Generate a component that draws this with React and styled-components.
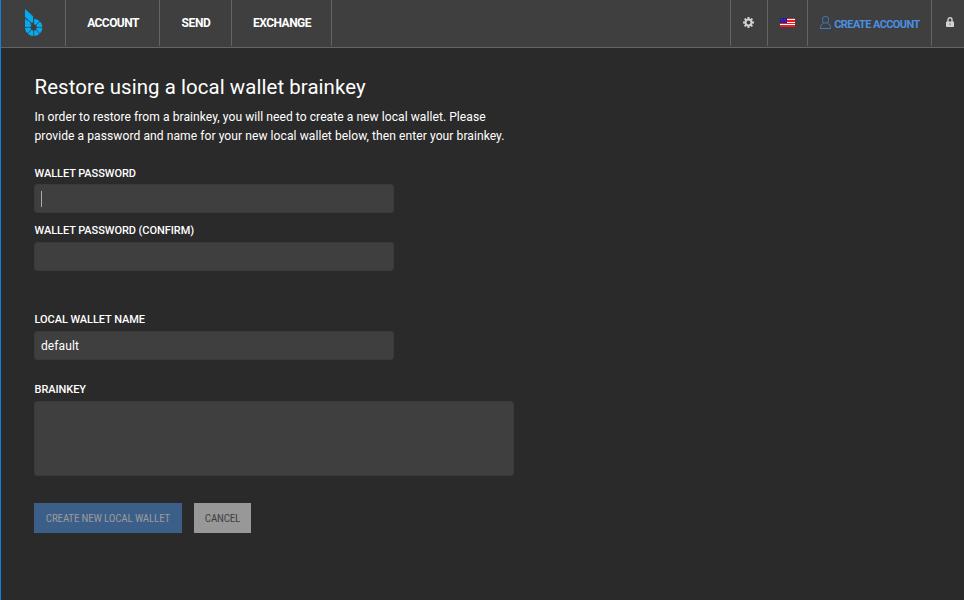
import React from "react";
import styled, { createGlobalStyle } from "styled-components";

const GlobalStyle = createGlobalStyle`
  * { box-sizing: border-box; }
  body {
    margin: 0;
    background: #2a2a2a;
    color: #fff;
    font-family: Roboto, "Liberation Sans", sans-serif;
  }
`;

const Page = styled.div`
  width: 964px;
  height: 600px;
  overflow: hidden;
  border-left: 1px solid #1580d8;
  background: #2a2a2a;
`;

const Header = styled.header`
  display: flex;
  height: 48px;
  padding-bottom: 1px;
  background: #3f3f3f;
  border-bottom: 1px solid #646464;
`;

const MenuItem = styled.a`
  display: flex;
  flex: none;
  align-items: center;
  justify-content: center;
  width: ${(p) => p.$width}px;
  padding-left: ${(p) => p.$inset || 0}px;
  border-right: 1px solid #646464;
  font-size: 12px;
  font-weight: 700;
  letter-spacing: ${(p) => p.$spacing || 0}px;
  white-space: nowrap;
`;

const Tools = styled.div`
  display: flex;
  flex: none;
  width: 234px;
  margin-left: auto;
  border-left: 1px solid #646464;
`;

const Tool = styled(MenuItem)`
  padding-bottom: ${(p) => p.$lift || 0}px;
  padding-right: ${(p) => p.$shift || 0}px;
`;

const AccountLink = styled(MenuItem)`
  gap: 3px;
  color: #4a90e2;
  font-size: 11px;
  svg { margin-top: -1px; }
  span { padding-top: 2px; }
`;

const LockCell = styled.a`
  display: flex;
  padding: 17px 0 0 14px;
`;

const Content = styled.main`
  padding: 26px 0 0 33px;
`;

const Title = styled.h1`
  margin: 0;
  padding-left: 0.5px;
  font-size: 20.4px;
  font-weight: 450;
  line-height: 26px;
  letter-spacing: 0.08px;
`;

const Intro = styled.p`
  margin: 8px 0 18px;
  padding-left: 0.5px;
  font-size: 12.1px;
  font-weight: 450;
  line-height: 19px;
  white-space: nowrap;
`;

const IntroLine = styled.span`
  display: block;
  letter-spacing: ${(p) => p.$spacing}px;
`;

const Field = styled.div`
  margin-bottom: ${(p) => p.$gap}px;
`;

const Label = styled.label`
  display: block;
  height: 20px;
  padding-left: 0.5px;
  font-size: 11px;
  font-weight: 550;
  line-height: ${(p) => p.$line || 18}px;
  letter-spacing: -0.06px;
`;

const Input = styled.div`
  display: flex;
  align-items: center;
  width: 360px;
  height: 29px;
  padding: 0 6px;
  border: 1px solid #3a3a3a;
  border-radius: 3px;
  background: #3f3f3f;
  font-size: 12px;
  font-weight: 450;
  letter-spacing: 0.1px;
`;

const TextArea = styled(Input)`
  width: 480px;
  height: 75px;
`;

const Caret = styled.span`
  width: 1px;
  height: 16px;
  background: #aaa;
`;

const Actions = styled.div`
  display: flex;
  gap: 12px;
`;

const Button = styled.button`
  display: flex;
  align-items: center;
  justify-content: center;
  width: ${(p) => p.$width}px;
  height: 30px;
  padding: 0;
  border: 0;
  background: ${(p) => (p.$primary ? "#3b5f89" : "#989898")};
  color: ${(p) => (p.$primary ? "#9a9a9a" : "#404040")};
  font-family: Roboto, sans-serif;
  font-size: 11px;
  font-weight: 450;
  font-stretch: 75%;
  letter-spacing: -0.17px;
  white-space: nowrap;
`;

const spokes = [0, 1, 2, 3, 4, 5, 6, 7];

const Logo = () => (
  <svg width="18" height="28" viewBox="0 0 18 28">
    <path d="M0 0 L8.1 7.2 V13.2 L6.6 13.8 L0 8Z" fill="#03abf0" />
    <path d="M0 9.4 L5.2 14.1 L4 17.9 H0Z" fill="#03abf0" />
    <circle cx="8.7" cy="18.4" r="5.9" fill="none" stroke="#03abf0" strokeWidth="5.6"
      strokeDasharray="32.4 4.67" transform="rotate(-90 8.7 18.4)" />
    {spokes.map((i) => (
      <path key={i} d={i === 3 ? "M8.7 18.4V23" : "M8.7 18.4V28"} stroke="#3f3f3f"
        strokeWidth="0.8" transform={`rotate(${i * 45} 8.7 18.4)`} />
    ))}
  </svg>
);

const Gear = () => (
  <svg width="11" height="11" viewBox="0 0 11 11">
    <circle cx="5.5" cy="5.5" r="3" fill="none" stroke="#d2d2d2" strokeWidth="2" />
    {[0, 45, 90, 135].map((a) => (
      <path key={a} d="M5.5 0V2.2M5.5 8.8V11" stroke="#d2d2d2" strokeWidth="2"
        transform={`rotate(${a} 5.5 5.5)`} />
    ))}
  </svg>
);

const Flag = () => (
  <svg width="15" height="9" viewBox="0 0 15 9" shapeRendering="crispEdges">
    <path fill="#fff" d="M0 0H15V9H0Z" />
    <path fill="#ee1b24" d="M0 0H15V1H0ZM0 2H15V4H0ZM0 5H15V6H0ZM0 7H15V9H0Z" />
    <path fill="#20209a" d="M0 0H7V5H0Z" />
    <path fill="#4a4ab0" d="M1 1H2V2H1ZM4 1H5V2H4ZM2 3H3V4H2ZM5 3H6V4H5Z" />
  </svg>
);

const User = () => (
  <svg width="11" height="13" viewBox="0 0 11 13" fill="none" stroke="#3f7abd">
    <rect x="2.5" y="0.5" width="6" height="6.5" rx="2.6" />
    <path d="M3.5 7.5C1.5 8 0.5 9 0.5 12.5H10.5C10.5 9 9.5 8 7.5 7.5" />
  </svg>
);

const Lock = () => (
  <svg width="8" height="10" viewBox="0 0 8 10">
    <path d="M2 5V2.8A2 2 0 0 1 6 2.8V5" fill="none" stroke="#d2d2d2" strokeWidth="1.4" />
    <rect y="4.5" width="8" height="5.5" rx="0.7" fill="#d2d2d2" />
    <path d="M4 6.2V8.2" stroke="#777" />
  </svg>
);

export default function App() {
  return (
    <Page>
      <GlobalStyle />
      <Header>
        <MenuItem $width={65} $inset={2}><Logo /></MenuItem>
        <MenuItem $width={94} $inset={1} $spacing={-0.55}>ACCOUNT</MenuItem>
        <MenuItem $width={72} $inset={1} $spacing={-0.4}>SEND</MenuItem>
        <MenuItem $width={100} $inset={1} $spacing={-0.5}>EXCHANGE</MenuItem>
        <Tools>
          <Tool $width={37} $lift={1} $shift={1}><Gear /></Tool>
          <Tool $width={40} $lift={1}><Flag /></Tool>
          <AccountLink $width={124} $inset={1} $spacing={-0.6}>
            <User />
            <span>CREATE ACCOUNT</span>
          </AccountLink>
          <LockCell><Lock /></LockCell>
        </Tools>
      </Header>
      <Content>
        <Title>Restore using a local wallet brainkey</Title>
        <Intro>
          <IntroLine $spacing={0.045}>In order to restore from a brainkey, you will need to create a new local wallet. Please</IntroLine>
          <IntroLine $spacing={0.055}>provide a password and name for your new local wallet below, then enter your brainkey.</IntroLine>
        </Intro>
        <Field $gap={9}>
          <Label $line={20}>WALLET PASSWORD</Label>
          <Input><Caret /></Input>
        </Field>
        <Field $gap={40}>
          <Label>WALLET PASSWORD (CONFIRM)</Label>
          <Input />
        </Field>
        <Field $gap={21}>
          <Label>LOCAL WALLET NAME</Label>
          <Input>default</Input>
        </Field>
        <Field $gap={27}>
          <Label>BRAINKEY</Label>
          <TextArea />
        </Field>
        <Actions>
          <Button $width={148} $primary>CREATE NEW LOCAL WALLET</Button>
          <Button $width={57}>CANCEL</Button>
        </Actions>
      </Content>
    </Page>
  );
}
